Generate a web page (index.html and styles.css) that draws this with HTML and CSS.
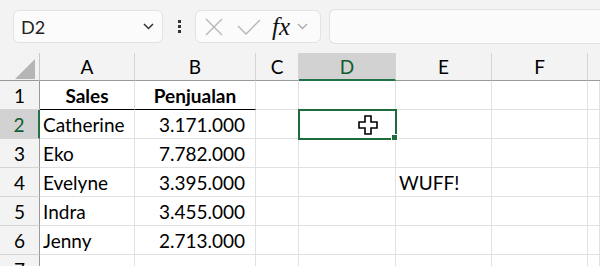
FILE: index.html
```html
<!DOCTYPE html>
<html lang="en">
<head>
  <meta charset="UTF-8">
  <title>Sheet</title>
  <link rel="stylesheet" href="styles.css">
</head>
<body>

<div class="toolbar">
  <div class="name-box">
    <span>D2</span>
    <svg class="chev" width="11" height="7" viewBox="0 0 11 7"><path d="M1 1 L5.5 5.5 L10 1" fill="none" stroke="#333" stroke-width="1.5"/></svg>
  </div>
  <div class="dots"><i></i><i></i><i></i></div>
  <div class="fx-group">
    <svg width="20" height="20" viewBox="0 0 20 20"><path d="M2 2 L18 18 M18 2 L2 18" stroke="#b8b8b8" stroke-width="1.4"/></svg>
    <svg width="24" height="18" viewBox="0 0 24 18"><path d="M1 8 L9 16 L23 2" fill="none" stroke="#b8b8b8" stroke-width="1.4"/></svg>
    <span class="fx">fx</span>
    <svg class="chev" width="11" height="7" viewBox="0 0 11 7"><path d="M1 1 L5.5 5.5 L10 1" fill="none" stroke="#aaa" stroke-width="1.4"/></svg>
  </div>
  <div class="formula-bar"></div>
</div>

<div class="sheet">
  <div class="corner"><span class="tri"></span></div>
  <div class="col-head">A</div>
  <div class="col-head">B</div>
  <div class="col-head">C</div>
  <div class="col-head active">D</div>
  <div class="col-head">E</div>
  <div class="col-head">F</div>
  <div class="col-head last"></div>

  <div class="row-head">1</div>
  <div class="cell bold center underline">Sales</div>
  <div class="cell bold center underline">Penjualan</div>
  <div class="cell"></div><div class="cell"></div><div class="cell"></div><div class="cell"></div><div class="cell"></div>

  <div class="row-head active">2</div>
  <div class="cell">Catherine</div>
  <div class="cell num">3.171.000</div>
  <div class="cell"></div>
  <div class="cell selected">
    <svg class="cursor" width="22" height="22" viewBox="0 0 22 22"><path d="M8 2 H14 V8 H20 V14 H14 V20 H8 V14 H2 V8 H8 Z" fill="#fff" stroke="#000" stroke-width="1.6"/></svg>
    <span class="handle"></span>
  </div>
  <div class="cell"></div><div class="cell"></div><div class="cell"></div>

  <div class="row-head">3</div>
  <div class="cell">Eko</div>
  <div class="cell num">7.782.000</div>
  <div class="cell"></div><div class="cell"></div><div class="cell"></div><div class="cell"></div><div class="cell"></div>

  <div class="row-head">4</div>
  <div class="cell">Evelyne</div>
  <div class="cell num">3.395.000</div>
  <div class="cell"></div><div class="cell"></div>
  <div class="cell">WUFF!</div>
  <div class="cell"></div><div class="cell"></div>

  <div class="row-head">5</div>
  <div class="cell">Indra</div>
  <div class="cell num">3.455.000</div>
  <div class="cell"></div><div class="cell"></div><div class="cell"></div><div class="cell"></div><div class="cell"></div>

  <div class="row-head">6</div>
  <div class="cell">Jenny</div>
  <div class="cell num">2.713.000</div>
  <div class="cell"></div><div class="cell"></div><div class="cell"></div><div class="cell"></div><div class="cell"></div>

  <div class="row-head">7</div>
  <div class="cell"></div><div class="cell"></div><div class="cell"></div><div class="cell"></div><div class="cell"></div><div class="cell"></div><div class="cell"></div>
</div>

</body>
</html>
```

FILE: styles.css
```css
body {
  margin: 0;
  font-family: Lato, "Open Sans", sans-serif;
  background: #f3f3f3;
  color: #000;
  width: 600px;
  height: 266px;
  overflow: hidden;
}

/* toolbar */
.toolbar {
  display: flex;
  align-items: center;
  height: 53px;
  padding-left: 13px;
  box-sizing: border-box;
}

.name-box {
  width: 150px;
  height: 33px;
  box-sizing: border-box;
  background: #fbfbfb;
  border: 1px solid #e2e2e2;
  border-radius: 6px;
  display: flex;
  align-items: center;
  justify-content: space-between;
  padding: 0 8px 0 7px;
  font-size: 18px;
  color: #222;
}

.dots {
  width: 32px;
  display: flex;
  flex-direction: column;
  align-items: center;
  gap: 2px;
}

.dots i {
  width: 3px;
  height: 3px;
  background: #333;
  display: block;
}

.fx-group {
  width: 126px;
  height: 33px;
  box-sizing: border-box;
  background: #fbfbfb;
  border: 1px solid #e2e2e2;
  border-radius: 6px;
  display: flex;
  align-items: center;
  padding: 0 6px 0 8px;
  gap: 13px;
}

.fx-group .fx {
  font-family: "Liberation Serif", serif;
  font-style: italic;
  font-size: 25px;
  line-height: 1;
  margin-left: -2px;
  margin-right: -6px;
  color: #111;
}

.formula-bar {
  flex: 1;
  height: 33px;
  margin-left: 8px;
  background: #fbfbfb;
  border: 1px solid #e2e2e2;
  border-right: none;
  border-radius: 6px 0 0 6px;
}

/* sheet grid */
.sheet {
  display: grid;
  grid-template-columns: 40px 95px 121px 43px 97px 96px 96px 12px;
  grid-template-rows: 28px repeat(7, 29px);
  font-size: 19px;
}

.corner {
  position: relative;
  border-right: 1px solid #c8c8c8;
  border-bottom: 1px solid #9a9a9a;
}

.corner .tri {
  position: absolute;
  right: 4px;
  bottom: 1px;
  width: 0;
  height: 0;
  border-left: 20px solid transparent;
  border-bottom: 20px solid #b5b5b5;
}

.col-head {
  display: flex;
  align-items: center;
  justify-content: center;
  border-right: 1px solid #d4d4d4;
  border-bottom: 1px solid #9a9a9a;
}

.col-head.active {
  background: #d2d2d2;
  color: #105c30;
  border-bottom: 2px solid #217346;
}

.col-head.last {
  border-right: none;
}

.row-head {
  display: flex;
  align-items: center;
  justify-content: center;
  border-right: 1px solid #9a9a9a;
  border-bottom: 1px solid #d4d4d4;
}

.row-head.active {
  background: #d2d2d2;
  color: #105c30;
  border-right: 2px solid #217346;
}

.cell {
  background: #fff;
  border-right: 1px solid #e1e1e1;
  border-bottom: 1px solid #e1e1e1;
  display: flex;
  align-items: center;
  padding: 0 3px;
  white-space: nowrap;
  overflow: visible;
}

.cell.bold { font-weight: bold; }
.cell.center { justify-content: center; }
.cell.num { justify-content: flex-end; padding-right: 10px; }
.cell.underline { border-bottom: 1px solid #000; }

.cell.selected {
  position: relative;
  outline: 2px solid #1e6b3c;
  outline-offset: -1px;
}

.cursor {
  position: absolute;
  left: 58px;
  top: 4px;
}

.handle {
  position: absolute;
  right: -3px;
  bottom: -3px;
  width: 5px;
  height: 5px;
  background: #1e6b3c;
  border: 1px solid #fff;
}
```
